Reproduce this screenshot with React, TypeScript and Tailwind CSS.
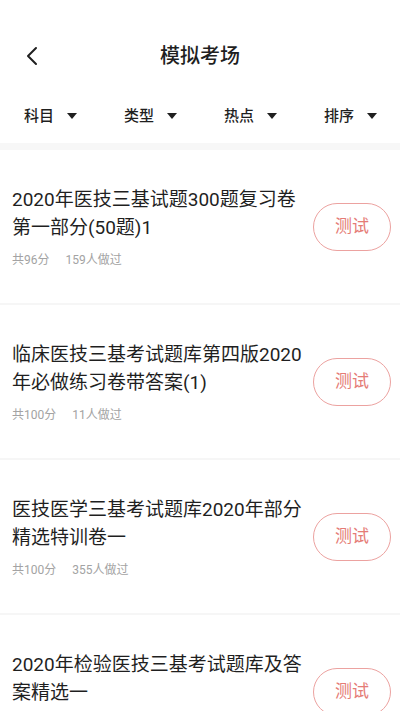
import React from 'react';

type Paper = {
  title: string;
  score: number;
  done: number;
};

const papers: Paper[] = [
  { title: '2020年医技三基试题300题复习卷第一部分(50题)1', score: 96, done: 159 },
  { title: '临床医技三基考试题库第四版2020年必做练习卷带答案(1)', score: 100, done: 11 },
  { title: '医技医学三基考试题库2020年部分精选特训卷一', score: 100, done: 355 },
  { title: '2020年检验医技三基考试题库及答案精选一', score: 100, done: 87 },
];

const filters = ['科目', '类型', '热点', '排序'];

function Caret() {
  return (
    <svg width="10" height="6" viewBox="0 0 10 6" className="ml-[13px]">
      <path d="M0 0h10L5 6z" fill="#1f1f1f" />
    </svg>
  );
}

export default function App() {
  return (
    <div
      className="w-[400px] h-[711px] overflow-hidden bg-white text-[#1f1f1f]"
      style={{ fontFamily: 'Roboto, "Noto Sans CJK SC", sans-serif' }}
    >
      {/* Nav bar */}
      <div className="relative h-[84px] pt-[28px] flex items-center justify-center">
        <button className="absolute left-[24px] top-[44px] w-[16px] h-[24px] flex items-center justify-center">
          <svg width="12" height="20" viewBox="0 0 12 20">
            <path d="M10 2 2 10l8 8" fill="none" stroke="#1f1f1f" strokeWidth="2" strokeLinecap="round" strokeLinejoin="round" />
          </svg>
        </button>
        <h1 className="text-[20px] leading-[28px] font-medium">模拟考场</h1>
      </div>

      {/* Filters */}
      <div className="h-[59px] pt-[4px] flex items-center">
        {filters.map((f) => (
          <div key={f} className="w-[100px] pl-[24px] flex items-center">
            <span className="text-[15px] leading-[20px] font-medium">{f}</span>
            <Caret />
          </div>
        ))}
      </div>
      <div className="h-[7px] bg-[#f7f7f7]" />

      {/* List */}
      {papers.map((p, i) => (
        <div key={i}>
          {i > 0 && <div className="h-[2px] bg-[#f6f6f6]" />}
          <div className="h-[153px] pl-[12px] pr-[9px] flex items-center justify-between">
            <div className="w-[296px]">
              <p className="text-[19px] leading-[28px] text-[#1f1f1f]">{p.title}</p>
              <div className="mt-[10px] flex text-[12px] leading-[16px] text-[#a3a3a3]">
                <span>共{p.score}分</span>
                <span className="ml-[16px]">{p.done}人做过</span>
              </div>
            </div>
            <button className="w-[78px] h-[48px] rounded-full border border-[#eca2a0] text-[17px] text-[#e57c76] flex items-center justify-center">
              测试
            </button>
          </div>
        </div>
      ))}
    </div>
  );
}
